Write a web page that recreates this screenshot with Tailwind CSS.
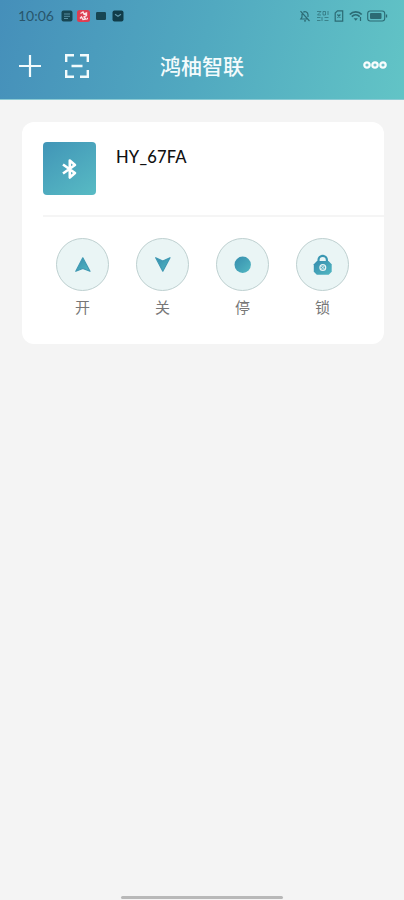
<!DOCTYPE html>
<html lang="zh-CN">
<head>
<meta charset="utf-8">
<meta name="viewport" content="width=device-width, initial-scale=1">
<title>鸿柚智联</title>
<script src="https://cdn.jsdelivr.net/npm/@tailwindcss/browser@4"></script>
</head>
<body class="bg-[#f4f4f4] font-['Noto_Sans','Noto_Sans_CJK_SC',sans-serif]">
<svg class="absolute" width="0" height="0" aria-hidden="true">
  <defs><linearGradient id="teal" x1="0" y1="0" x2="1" y2="1"><stop stop-color="#368dae"/><stop offset="1" stop-color="#52b8c2"/></linearGradient></defs>
</svg>
<div class="flex h-[900px] w-[404px] flex-col overflow-hidden">
  <header class="h-[100px] shrink-0 border-b border-[#8ccbd4] bg-linear-[105deg,#458fba_0%,#51a9c0_50%,#62c4c6_100%]">
    <div class="flex h-8 items-center justify-between pl-[18px] pr-[16px]">
      <div class="flex items-center">
        <span class="w-[43px] font-['Lato','Roboto',sans-serif] text-[14px] leading-8 text-[#28566c]">10:06</span>
        <div class="flex items-center gap-[5px]">
          <svg width="12" height="12" viewBox="0 0 12 12"><rect x=".5" y=".5" width="11" height="11" rx="2" fill="#174653"/><path d="M3 4h6M3 6.3h6M3 8.5h4" stroke="#6097aa" stroke-width=".9"/></svg>
          <svg class="-ml-px" width="13" height="12" viewBox="0 0 13 12"><rect width="13" height="12" rx="2.5" fill="#dd3e52"/><path d="M3.500 3.500 6 2l1 2 2.500-1v2.500L7 7l2 2-3 .5L4.500 7 3 8.500M10 8.500h1" fill="none" stroke="#fbe1e5" stroke-width="1.400"/></svg>
          <svg width="12" height="12" viewBox="0 0 12 12"><rect x="1" y="2" width="10" height="8" rx="1.200" fill="#174653"/></svg>
          <svg width="12" height="12" viewBox="0 0 12 12"><rect x=".5" y=".5" width="11" height="11" rx="2" fill="#103c49"/><path d="M3 4.300 6 6.300l3-2" fill="none" stroke="#6097aa" stroke-width="1.200"/></svg>
        </div>
      </div>
      <div class="flex items-center gap-[5px] text-[#2c6b74]">
        <svg width="12" height="12" viewBox="0 0 12 12" fill="none" stroke="currentColor" stroke-width="1.200"><path d="M1.500 1.200 10.500 11M3 3.800V7L1.800 9H8M4.300 2.300C6 .8 9 2 9 4.700v2.400M5 10.800h2"/></svg>
        <svg width="14" height="12" viewBox="0 0 14 12" fill="none" stroke="currentColor" stroke-opacity=".7" stroke-width="1"><path d="M1 1.500h4L1.500 5H5M7 1.500h2.500V5H7zM12 1v4M1 7.500h3.500M1 10.500h3.500M6 7v4M8.500 7.500h4M8.500 10.500h4"/></svg>
        <svg class="-ml-px" width="10" height="12" viewBox="0 0 10 12" fill="none" stroke="currentColor" stroke-width="1.200"><path d="M3.500.8h5.200v10.400H1.200V3zM3.400 4.500l3 3M6.400 4.500l-3 3"/></svg>
        <svg width="14" height="12" viewBox="0 0 14 12" fill="none" stroke="currentColor"><path d="M.8 4.500C4 1 9.500 1 12.700 4.500" stroke-width="1.800"/><path d="M2.800 6.600c2.200-2.200 5.600-2.200 7.900 0" stroke-width="1.700"/><path d="M4.600 8.300h4.300L6.700 10.800z" fill="currentColor" stroke="none"/><path d="M11.500 7v4" stroke-width="1.200"/></svg>
        <svg class="-ml-px" width="21" height="12" viewBox="0 0 21 12"><rect x=".7" y="1" width="17" height="10" rx="2.500" fill="none" stroke="currentColor" stroke-width="1.100"/><rect x="3" y="3" width="11.500" height="6" rx="1" fill="currentColor"/><path d="M19.500 4.500v3" stroke="currentColor" stroke-width="1.300"/></svg>
      </div>
    </div>
    <div class="grid h-[67px] grid-cols-[1fr_auto_1fr] items-center pl-[17px] pr-[17px]">
      <div class="flex items-center gap-[23px] pl-px">
        <svg width="24" height="24" viewBox="0 0 24 24" stroke="#f3fbfc" stroke-width="2.200"><path d="M12 1v22M1 12h22"/></svg>
        <svg width="24" height="24" viewBox="0 0 24 24" fill="none" stroke="#f3fbfc" stroke-width="2.400"><path d="M1.200 8V1.200H9M15 1.200h7.800V8M22.800 16v6.800H15M9 22.800H1.200V16M6.500 12h11"/></svg>
      </div>
      <h1 class="text-[21px] leading-[30px] font-medium text-[#f4fbfc]">鸿柚智联</h1>
      <svg class="relative -top-px justify-self-end" width="24" height="8" viewBox="0 0 24 8"><g fill="#70c3cb" stroke="#f8fdfd" stroke-width="2.200"><circle cx="4" cy="4" r="2.700"/><circle cx="12" cy="4" r="2.700"/><circle cx="20" cy="4" r="2.700"/></g></svg>
    </div>
  </header>
  <main class="flex-1 pl-[22px] pr-5 pt-[22px]">
    <section class="h-[222px] rounded-[12px] bg-white pl-[21px]">
      <div class="flex h-[95px] border-b-2 border-[#f5f5f5] pt-5">
        <div class="flex size-[53px] items-center justify-center rounded-[4px] bg-linear-[145deg,#4195b7,#58bbc4]">
          <svg width="16" height="22" viewBox="0 0 16 22" fill="none" stroke="#fff" stroke-width="2.600" stroke-linejoin="round"><path d="m1 6.500 12 8.500-5.200 4.500V2.500L13 7 1 15.500"/></svg>
        </div>
        <h2 class="ml-5 mt-[3px] font-['Lato','Noto_Sans_CJK_SC',sans-serif] text-[16.500px] leading-6 font-medium tracking-[0.2px] text-[#111]">HY_67FA</h2>
      </div>
      <div class="flex gap-[27px] pl-[13px] pt-[21px] text-[15px] leading-[22px] text-[#777]">
        <button class="flex w-[53px] flex-col items-center gap-[5px]">
          <span class="flex size-[53px] items-center justify-center rounded-full border border-[#bed0d0] bg-[#eaf5f5]"><svg width="18" height="18" viewBox="0 0 18 18"><path d="M8.800 1.800 16 15.300 8.800 12.500 1.800 15.300Z" fill="url(#teal)" stroke="#4099b3" stroke-width="1.200" stroke-linejoin="round"/></svg></span>
          <span>开</span>
        </button>
        <button class="flex w-[53px] flex-col items-center gap-[5px]">
          <span class="flex size-[53px] items-center justify-center rounded-full border border-[#bed0d0] bg-[#eaf5f5]"><svg width="18" height="18" viewBox="0 0 18 18"><path d="M8.800 15.200 16 1.700 8.800 5 1.700 1.700Z" fill="url(#teal)" stroke="#4099b3" stroke-width="1.200" stroke-linejoin="round"/></svg></span>
          <span>关</span>
        </button>
        <button class="flex w-[53px] flex-col items-center gap-[5px]">
          <span class="flex size-[53px] items-center justify-center rounded-full border border-[#bed0d0] bg-[#eaf5f5]"><svg width="18" height="18" viewBox="0 0 18 18"><circle cx="8.700" cy="8.700" r="8.200" fill="url(#teal)"/></svg></span>
          <span>停</span>
        </button>
        <button class="flex w-[53px] flex-col items-center gap-[5px]">
          <span class="flex size-[53px] items-center justify-center rounded-full border border-[#bed0d0] bg-[#eaf5f5]"><svg width="20" height="22" viewBox="0 0 20 22"><path d="M5.500 8V6a4.200 4.200 0 0 1 8.400 0v2" fill="none" stroke="#3997b2" stroke-width="2.200"/><path d="M4 7h11.500l3.200 3.200v7.600l-3 3H3.800l-3-3v-7.600z" fill="url(#teal)"/><circle cx="9.800" cy="13.500" r="2.900" fill="#59adc0" stroke="#eaf5f5" stroke-width="1.200"/><path d="m8.200 11.900 3.200 3.200m0-3.200-3.200 3.200" stroke="#eaf5f5" stroke-width=".8"/></svg></span>
          <span>锁</span>
        </button>
      </div>
    </section>
  </main>
  <div class="mb-[1px] h-[3px] w-[162px] shrink-0 self-center rounded-full bg-[#b8b8b8]"></div>
</div>
</body>
</html>
